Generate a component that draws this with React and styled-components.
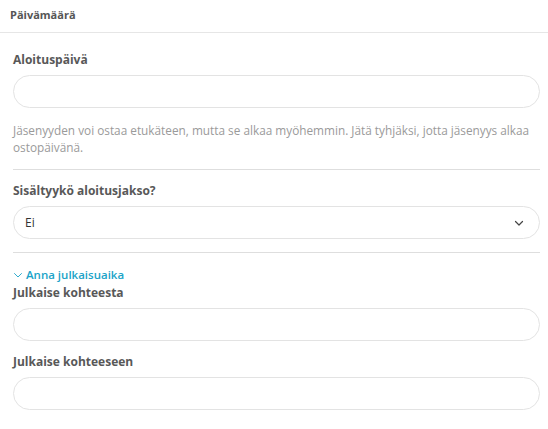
import React from 'react'
import styled, { createGlobalStyle } from 'styled-components'

const GlobalStyle = createGlobalStyle`
  body {
    margin: 0;
    background: #fff;
    font-family: 'Open Sans', 'Noto Sans', sans-serif;
  }
`

const Panel = styled.div`
  width: 548px;
  box-sizing: border-box;
`

const Header = styled.div`
  height: 32px;
  line-height: 30px;
  padding-left: 10px;
  font-size: 11px;
  font-weight: 700;
  color: #555;
  border-bottom: 1px solid #e6e6e6;
`

const Body = styled.div`
  padding: 18px 8px 0 13px;
  display: flex;
  flex-direction: column;
`

const Field = styled.div`
  display: flex;
  flex-direction: column;
  margin-top: ${({ gap }) => gap || 0}px;
`

const Label = styled.label`
  font-size: 12px;
  line-height: 18px;
  font-weight: 700;
  color: #585858;
  margin-bottom: 6px;
`

const Input = styled.div`
  height: 33px;
  box-sizing: border-box;
  border: 1px solid #e3e3e3;
  border-radius: 17px;
  background: #fff;
`

const Select = styled(Input)`
  display: flex;
  align-items: center;
  justify-content: space-between;
  padding: 0 15px 0 11px;
  font-size: 12px;
  color: #333;
`

const Help = styled.p`
  margin: 14px 0 13px;
  font-size: 11.8px;
  line-height: 17px;
  color: #9a9a9a;
`

const Divider = styled.hr`
  border: 0;
  border-top: 1px solid #dedede;
  margin: 0;
`

const Toggle = styled.div`
  display: flex;
  align-items: center;
  gap: 3px;
  margin-top: 13px;
  font-size: 11.5px;
  line-height: 18px;
  font-weight: 600;
  color: #1aa3c8;
`

const Chevron = ({ size, color, width }) => (
  <svg width={size} height={size} viewBox="0 0 10 10" fill="none">
    <path d="M1.5 3.5 L5 7 L8.5 3.5" stroke={color} strokeWidth={width} strokeLinecap="round" strokeLinejoin="round" />
  </svg>
)

const App = () => {
  return (
    <>
      <GlobalStyle />
      <Panel>
        <Header>Päivämäärä</Header>
        <Body>
          <Field>
            <Label>Aloituspäivä</Label>
            <Input />
          </Field>
          <Help>
            Jäsenyyden voi ostaa etukäteen, mutta se alkaa myöhemmin. Jätä tyhjäksi, jotta jäsenyys alkaa ostopäivänä.
          </Help>
          <Divider />
          <Field gap={12}>
            <Label>Sisältyykö aloitusjakso?</Label>
            <Select>
              <span>Ei</span>
              <Chevron size={10} color="#444" width={1.2} />
            </Select>
          </Field>
          <Field gap={13}>
            <Divider />
          </Field>
          <Toggle>
            <Chevron size={10} color="#1aa3c8" width={0.9} />
            Anna julkaisuaika
          </Toggle>
          <Field>
            <Label>Julkaise kohteesta</Label>
            <Input />
          </Field>
          <Field gap={12}>
            <Label>Julkaise kohteeseen</Label>
            <Input />
          </Field>
        </Body>
      </Panel>
    </>
  )
}

export default App
